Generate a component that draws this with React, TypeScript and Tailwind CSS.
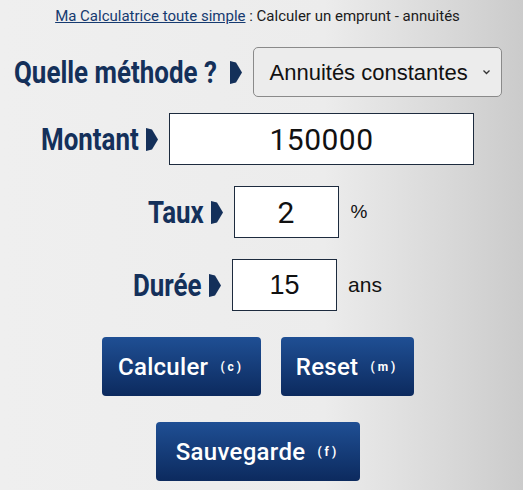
import React from "react";

function Arrow() {
  return (
    <svg width="12" height="23" viewBox="0 0 12 23" className="block shrink-0">
      <polygon points="0,0 6,1.5 12,11.5 6,21.5 0,23" fill="#14305a" />
    </svg>
  );
}

function Label({ text, w }: { text: string; w: string }) {
  return (
    <span className={`${w} shrink-0 whitespace-nowrap font-['Roboto',sans-serif] text-[32px] font-bold leading-none text-[#14305a]`}>
      <span className="inline-block origin-left scale-x-[0.81]">{text}</span>
    </span>
  );
}

function Btn({ label, k, w }: { label: string; k: string; w: string }) {
  return (
    <div
      className={`${w} h-[59px] rounded-[4px] flex items-center justify-center gap-[12px] text-white bg-[linear-gradient(to_bottom,#1f4f94,#0c2a5e)] font-['Roboto',sans-serif]`}
    >
      <span className="text-[24px] font-medium tracking-[0.3px]">{label}</span>
      <span className="text-[12px] font-bold tracking-[3px]">({k})</span>
    </div>
  );
}

export default function App() {
  return (
    <div className="w-[523px] h-[490px] overflow-hidden bg-[linear-gradient(to_right,#efefef_0%,#ececec_62%,#d9d9d9_85%,#cbcbcb_100%)]">
      <div className="w-[515px] flex flex-col items-center">
        <div className="mt-[6px] h-[20px] flex items-center whitespace-nowrap font-['Roboto',sans-serif] text-[15px] text-[#1b1b1b]">
          <span className="underline text-[#163a70]">Ma Calculatrice toute simple</span>
          <span>&nbsp;: Calculer un emprunt - annuités</span>
        </div>

        <div className="mt-[21px] h-[50px] flex items-center">
          <Label text="Quelle méthode ?" w="w-[208px]" />
          <span className="ml-[8px]">
            <Arrow />
          </span>
          <div className="ml-[11px] w-[249px] h-[50px] rounded-[5px] border border-[#8a8a8a] bg-[#ececec] flex items-center pl-[16px] pr-[10px] justify-between font-['Liberation_Sans',Arial,sans-serif]">
            <span className="text-[22px] text-[#111]">Annuités constantes</span>
            <svg width="9" height="6" viewBox="0 0 9 6">
              <path d="M1.5 1.5 L4.5 4.5 L7.5 1.5" fill="none" stroke="#333" strokeWidth="1.3" />
            </svg>
          </div>
        </div>

        <div className="mt-[16px] h-[52px] flex items-center">
          <Label text="Montant" w="w-[97px]" />
          <span className="ml-[8px]">
            <Arrow />
          </span>
          <div className="ml-[11px] w-[305px] h-[52px] border border-[#1d2b3e] bg-white flex items-center justify-center font-['Roboto',sans-serif] text-[30px] text-[#111] tracking-[0.5px]">
            150000
          </div>
        </div>

        <div className="mt-[21px] h-[52px] flex items-center">
          <Label text="Taux" w="w-[55px]" />
          <span className="ml-[8px]">
            <Arrow />
          </span>
          <div className="ml-[11px] w-[105px] h-[52px] border border-[#1d2b3e] bg-white flex items-center justify-center font-['Roboto',sans-serif] text-[30px] text-[#111]">
            2
          </div>
          <span className="ml-[12px] text-[19px] text-[#111] font-['Liberation_Sans',Arial,sans-serif]">%</span>
        </div>

        <div className="mt-[21px] h-[52px] flex items-center">
          <Label text="Durée" w="w-[68px]" />
          <span className="ml-[8px]">
            <Arrow />
          </span>
          <div className="ml-[11px] w-[105px] h-[52px] border border-[#1d2b3e] bg-white flex items-center justify-center font-['Liberation_Sans',Arial,sans-serif] text-[27px] text-[#111]">
            15
          </div>
          <span className="ml-[11px] text-[21px] text-[#111] font-['Liberation_Sans',Arial,sans-serif]">ans</span>
        </div>

        <div className="mt-[26px] flex gap-[20px]">
          <Btn label="Calculer" k="c" w="w-[159px]" />
          <Btn label="Reset" k="m" w="w-[133px]" />
        </div>
        <div className="mt-[26px]">
          <Btn label="Sauvegarde" k="f" w="w-[204px]" />
        </div>
      </div>
    </div>
  );
}
